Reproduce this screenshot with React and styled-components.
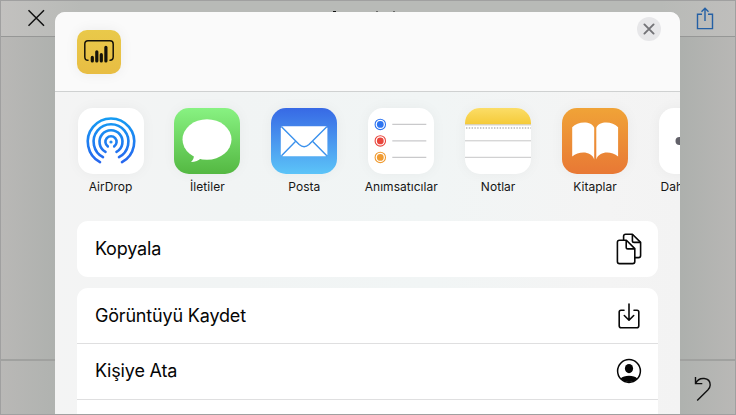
import React from "react";
import styled, { createGlobalStyle } from "styled-components";

const GlobalStyle = createGlobalStyle`
  * { box-sizing: border-box; }
  body { margin: 0; overflow: hidden; font-family: Inter, "Liberation Sans", sans-serif; color: #050505; }
  svg { display: block; flex: none; }
`;

const Screen = styled.main`
  position: relative;
  display: grid;
  grid-template-rows: 36px 1fr 55px;
  width: 736px;
  height: 415px;
  border: 1px solid #a0a0a0;
  overflow: hidden;
  background: linear-gradient(90deg, #b9b8b6 0, #adb0ad 60px, #adb0ad 680px, #b8b7b5 100%);
`;

const TopBar = styled.header`
  display: flex;
  align-items: flex-start;
  justify-content: space-between;
  padding: 6px 21px 0 26px;
  border-bottom: 1px solid #969796;
  background: linear-gradient(90deg, #c2c1bf 0, #b8bab7 80px, #b8bab7 660px, #bfbebc 100%);
`;

const TitlePeek = styled.svg`
  margin: 3px auto 0 287px;
`;

const BottomBar = styled.footer`
  display: flex;
  justify-content: flex-end;
  padding: 15px 23px 0 0;
  border-top: 2px solid #a0a19f;
  background: linear-gradient(90deg, #b9b8b6 0, #afb2af 60px, #afb2af 680px, #b9b8b6 100%);
`;

const Sheet = styled.section`
  position: absolute;
  left: 54.4px;
  top: 11px;
  width: 625px;
  height: 402px;
  border-radius: 10px 10px 0 0;
  overflow: hidden;
  background: linear-gradient(90deg, #f4f4f4 0, #f1f4f4 27%, #f1f5f5 60%, #f4f4f4 88%, #f3f3f3 100%);
`;

const SheetHeader = styled.div`
  display: flex;
  justify-content: space-between;
  height: 80px;
  padding: 18px 19px 0 22px;
  border-bottom: 1px solid #cfd1d1;
  background: #fafafa;
`;

const AppBadge = styled.div`
  display: grid;
  place-items: center;
  width: 44px;
  height: 44px;
  border-radius: 10px;
  background: linear-gradient(#e9c94a, #e8bd43);
  box-shadow: 0 0 14px rgba(0, 0, 0, 0.06);
`;

const CloseButton = styled.button`
  display: grid;
  place-items: center;
  width: 24px;
  height: 24px;
  margin-top: -13px;
  padding: 0;
  border: 0;
  border-radius: 50%;
  background: #e7e7e9;
`;

const AppStrip = styled.div`
  display: flex;
  gap: 30.9px;
  height: 129px;
  padding: 16px 0 0 22.2px;
`;

const AppItem = styled.div`
  display: flex;
  flex: none;
  flex-direction: column;
  align-items: center;
  width: 66px;
`;

const AppTile = styled.div`
  width: 66px;
  height: 66px;
  border-radius: 15px;
  overflow: hidden;
  background: ${(p) => p.$fill || "#fff"};
  box-shadow: 0 0 14px rgba(0, 0, 0, 0.045);
`;

const AppLabel = styled.span`
  margin-top: 5px;
  font-size: 12px;
  line-height: 16px;
  letter-spacing: 0.04px;
  white-space: nowrap;
  color: #161616;
`;

const Actions = styled.div`
  display: grid;
  gap: 11px;
  padding: 0 22px;
`;

const ActionCard = styled.div`
  border-radius: 11px;
  background: #fff;
`;

const ActionRow = styled.div`
  display: flex;
  align-items: center;
  justify-content: space-between;
  height: ${(p) => p.$height || 56}px;
  padding: 0 16px 0 17.5px;
  font-size: 18px;
  letter-spacing: -0.17px;
  & + & { border-top: 1px solid #dfdfe0; }
`;

const ActionLabel = styled.span`
  padding-bottom: 1px;
`;

const AirDropIcon = () => (
  <svg width="66" height="66" viewBox="0 0 66 66" fill="none">
    <defs>
      <linearGradient id="air" gradientUnits="userSpaceOnUse" x1="0" y1="10" x2="0" y2="56">
        <stop stopColor="#159cf3" /><stop offset="1" stopColor="#2764ee" />
      </linearGradient>
    </defs>
    <g stroke="url(#air)" strokeWidth="2.6" strokeLinecap="round">
      <path d="M22 54.1A23.2 23.2 0 1 1 44 54.1" />
      <path d="M25 49.1A17.4 17.4 0 1 1 41 49.1" />
      <path d="M27.5 43.8A11.5 11.5 0 1 1 38.5 43.8" />
      <path d="M29.8 38.4A5.6 5.6 0 1 1 36.2 38.4" />
    </g>
    <circle cx="33" cy="34" r="1.6" fill="#218bf2" />
  </svg>
);

const MessagesIcon = () => (
  <svg width="66" height="66" viewBox="0 0 66 66" fill="#fff">
    <ellipse cx="33" cy="31.5" rx="24.5" ry="20.3" />
    <path d="M20 47c0 3-1 5-3 7 4 0 8-1.4 10-4Z" />
  </svg>
);

const MailIcon = () => (
  <svg width="66" height="66" viewBox="0 0 66 66" fill="none">
    <rect x="9.8" y="18.2" width="46.6" height="30" rx="2" fill="#fff" />
    <g stroke="#3b91ec" strokeWidth="1.4">
      <path d="M10.5 18.8 28.2 36.6Q33.1 41 38 36.6L55.8 18.8" />
      <path d="M10.5 47.8 24.7 33.2M55.8 47.8 41.5 33.2" />
    </g>
  </svg>
);

const reminders = [["#2d74f1", 16.4], ["#e9453c", 32.9], ["#f09b31", 49.4]];
const RemindersIcon = () => (
  <svg width="66" height="66" viewBox="0 0 66 66">
    {reminders.map(([color, y]) => (
      <g key={y}>
        <circle cx="12.3" cy={y} r="5.2" fill="none" stroke={color} strokeWidth="1.1" />
        <circle cx="12.3" cy={y} r="3.4" fill={color} />
        <path d={`M24.3 ${y}H58.3`} stroke="#c9c9cb" strokeWidth="1.1" />
      </g>
    ))}
  </svg>
);

const NotesIcon = () => (
  <svg width="66" height="66" viewBox="0 0 66 66" fill="none">
    <defs>
      <linearGradient id="note" x1="0" y1="0" x2="0" y2="1">
        <stop stopColor="#fbdd67" /><stop offset="1" stopColor="#f5ca38" />
      </linearGradient>
    </defs>
    <rect width="66" height="16.5" fill="url(#note)" />
    <path d="M0 16.9H66M0 32.8H66M0 49.3H66" stroke="#c6c6c7" />
    <path d="M1 20H66" stroke="#b8b8b9" strokeWidth="1.4" strokeDasharray="1.4 1.4" />
  </svg>
);

const BooksIcon = () => (
  <svg width="66" height="66" viewBox="0 0 66 66" fill="#fff">
    <path d="M32.2 51.4C29.5 42.7 17 42.6 10.2 48.4V19.3C15.5 13 29.7 12.7 32.2 19.7Z" />
    <path d="M34.3 51.4C37 42.7 49.3 42.6 56.1 48.4V19.3C50.8 13 36.8 12.7 34.3 19.7Z" />
  </svg>
);

const MoreIcon = () => (
  <svg width="66" height="66" viewBox="0 0 66 66" fill="#626169">
    <circle cx="20.5" cy="33" r="4" /><circle cx="33" cy="33" r="4" /><circle cx="45.5" cy="33" r="4" />
  </svg>
);

const PowerBiIcon = () => (
  <svg width="30" height="24" viewBox="0 0 30 24" fill="none" stroke="#15120a" strokeLinecap="round">
    <path d="M4 20.3Q.8 20.3.8 16.8V4Q.8.8 4 .8H26Q29.2.8 29.2 4V16.8Q29.2 20.3 26 20.3" strokeWidth="1.5" />
    <path d="M8.3 17.4V21M12.8 11.8V21M17.3 14.7V21M21.9 7.3V21" strokeWidth="3.2" />
  </svg>
);

const CopyIcon = () => (
  <svg width="26" height="32" viewBox="0 0 26 32" fill="none" stroke="#080808" strokeWidth="1.6" strokeLinejoin="round">
    <path d="M7.6 7.1V3.3Q7.6 1.2 9.7 1.2H16.4L24.6 9.4V22.5Q24.6 24.6 22.5 24.6H19" />
    <path d="M16.4 1.2V7.7Q16.4 9.4 18.1 9.4H24.6" />
    <path d="M3.5 7.2H10.4L18.8 15.6V28.4Q18.8 30.6 16.6 30.6H3.5Q1.4 30.6 1.4 28.4V9.3Q1.4 7.2 3.5 7.2Z" fill="#fff" />
    <path d="M10.2 7.4V14.2Q10.2 15.9 11.9 15.9H18.6" />
  </svg>
);

const SaveIcon = () => (
  <svg width="26" height="28" viewBox="0 0 26 28" fill="none" stroke="#080808" strokeWidth="1.6" strokeLinecap="round" strokeLinejoin="round">
    <path d="M8 8.2H5Q3.2 8.2 3.2 10V23.7Q3.2 25.7 5.2 25.7H20.8Q22.8 25.7 22.8 23.7V10Q22.8 8.2 21 8.2H18" />
    <path d="M13 2V18M8.3 13.5 13 18.2 17.7 13.5" />
  </svg>
);

const PersonIcon = () => (
  <svg width="26" height="26" viewBox="0 0 26 26" fill="none">
    <circle cx="13" cy="13" r="11.4" stroke="#050505" strokeWidth="1.5" />
    <ellipse cx="13" cy="10.6" rx="4.1" ry="4.6" fill="#050505" />
    <path d="M4.7 20.5C7.7 16.8 18.3 16.8 21.3 20.5A11.4 11.4 0 0 1 4.7 20.5Z" fill="#050505" />
  </svg>
);

const apps = [
  { name: "AirDrop", Icon: AirDropIcon },
  { name: "İletiler", Icon: MessagesIcon, fill: "linear-gradient(#88f282, #54b842)" },
  { name: "Posta", Icon: MailIcon, fill: "linear-gradient(#3769e5, #5cc4f8)" },
  { name: "Anımsatıcılar", Icon: RemindersIcon },
  { name: "Notlar", Icon: NotesIcon },
  { name: "Kitaplar", Icon: BooksIcon, fill: "linear-gradient(#f0a337, #e87835)" },
  { name: "Daha Fazla", Icon: MoreIcon },
];

export default function App() {
  return (
    <>
      <GlobalStyle />
      <Screen>
        <TopBar>
          <svg width="18" height="22" viewBox="0 0 18 22" fill="none" stroke="#111" strokeWidth="1.5">
            <path d="M1.5 3.3 17 18.8M17 3.3 1.5 18.8" />
          </svg>
          <TitlePeek width="70" height="3" viewBox="0 0 70 3">
            <path d="M1 1.5H4" stroke="#111" />
            <path d="M44 1.5H46M61 1.5H63" stroke="#686968" />
          </TitlePeek>
          <svg width="18" height="24" viewBox="0 0 18 24" fill="none" stroke="#2460a5" strokeWidth="1.4">
            <path d="M6 7.3H1.5V21.6H16.5V7.3H12M9 14V1.2M5.5 4.7 9 1.2 12.5 4.7" />
          </svg>
        </TopBar>
        <div />
        <BottomBar>
          <svg width="18" height="26" viewBox="0 0 18 26" fill="none" stroke="#111" strokeWidth="1.4">
            <path d="M1.5 1V7.6H8.3M1.7 7.4C5 .2 16.2 1.1 16.2 9C16.2 11.2 15.2 12.6 13.8 14.1L3.2 24.6" />
          </svg>
        </BottomBar>
        <Sheet>
          <SheetHeader>
            <AppBadge><PowerBiIcon /></AppBadge>
            <CloseButton aria-label="Kapat">
              <svg width="12" height="12" viewBox="0 0 12 12" stroke="#737377" strokeWidth="1.9" strokeLinecap="round">
                <path d="M1.4 1.4 10.6 10.6M10.6 1.4 1.4 10.6" />
              </svg>
            </CloseButton>
          </SheetHeader>
          <AppStrip>
            {apps.map(({ name, Icon, fill }) => (
              <AppItem key={name}>
                <AppTile $fill={fill}><Icon /></AppTile>
                <AppLabel>{name}</AppLabel>
              </AppItem>
            ))}
          </AppStrip>
          <Actions>
            <ActionCard>
              <ActionRow><ActionLabel>Kopyala</ActionLabel><CopyIcon /></ActionRow>
            </ActionCard>
            <ActionCard>
              <ActionRow $height={55}><ActionLabel>Görüntüyü Kaydet</ActionLabel><SaveIcon /></ActionRow>
              <ActionRow $height={55.5}><ActionLabel>Kişiye Ata</ActionLabel><PersonIcon /></ActionRow>
              <ActionRow />
            </ActionCard>
          </Actions>
        </Sheet>
      </Screen>
    </>
  );
}
